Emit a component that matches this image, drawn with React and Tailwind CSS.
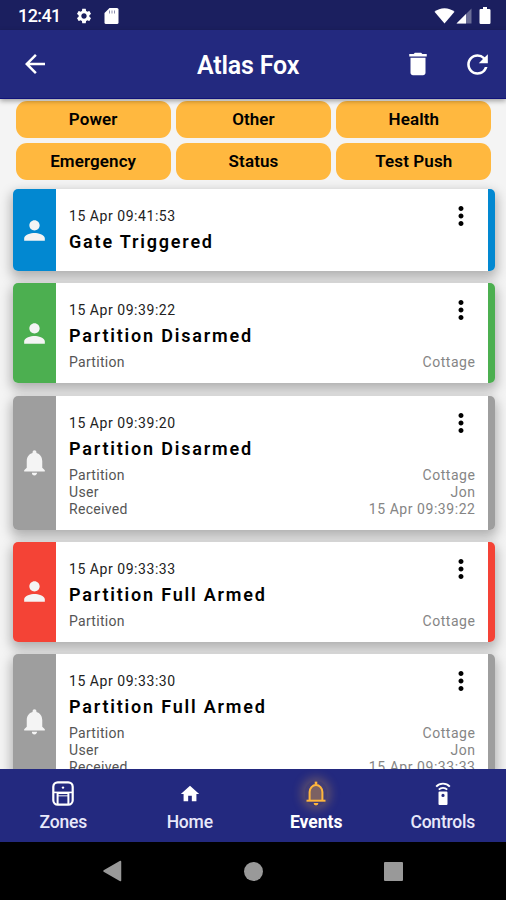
import React from "react"
import {
  MdArrowBack,
  MdDelete,
  MdRefresh,
  MdPerson,
  MdNotifications,
  MdMoreVert,
  MdHome,
  MdSettings,
} from "react-icons/md"

const filters = ["Power", "Other", "Health", "Emergency", "Status", "Test Push"]

const events = [
  {
    time: "15 Apr 09:41:53",
    title: "Gate Triggered",
    color: "bg-[#0288d1]",
    height: "h-[82px]",
    icon: MdPerson,
    details: [],
  },
  {
    time: "15 Apr 09:39:22",
    title: "Partition Disarmed",
    color: "bg-[#4caf50]",
    height: "h-[100px]",
    icon: MdPerson,
    details: [["Partition", "Cottage"]],
  },
  {
    time: "15 Apr 09:39:20",
    title: "Partition Disarmed",
    color: "bg-[#9e9e9e]",
    height: "h-[134px]",
    icon: MdNotifications,
    details: [
      ["Partition", "Cottage"],
      ["User", "Jon"],
      ["Received", "15 Apr 09:39:22"],
    ],
  },
  {
    time: "15 Apr 09:33:33",
    title: "Partition Full Armed",
    color: "bg-[#f44336]",
    height: "h-[100px]",
    icon: MdPerson,
    details: [["Partition", "Cottage"]],
  },
  {
    time: "15 Apr 09:33:30",
    title: "Partition Full Armed",
    color: "bg-[#9e9e9e]",
    height: "h-[134px]",
    icon: MdNotifications,
    details: [
      ["Partition", "Cottage"],
      ["User", "Jon"],
      ["Received", "15 Apr 09:33:33"],
    ],
  },
]

const ZonesIcon = () => (
  <svg width="22" height="25" viewBox="0 0 22 25" fill="none">
    <rect x="1.3" y="1.3" width="19.4" height="22.4" rx="4.5" stroke="white" strokeWidth="2.2" />
    <path d="M2 11.400h18" stroke="white" strokeWidth="1.6" />
    <circle cx="11" cy="6.6" r="1.2" fill="white" />
    <path d="M5.600 23.500V12h10.800v11.500" stroke="white" strokeWidth="2" />
    <path d="M6 14.800h10" stroke="white" strokeWidth="1.2" strokeOpacity="0.8" />
  </svg>
)

const BellIcon = () => (
  <svg width="22" height="25" viewBox="0 0 22 25" fill="none">
    <path
      d="M4.600 19.400V11a6.400 7 0 0 1 12.800 0v8.400"
      fill="#ffb63d"
      fillOpacity="0.3"
      stroke="#ffb63d"
      strokeWidth="2"
    />
    <path d="M1.500 19.700h19" stroke="#ffb63d" strokeWidth="2" />
    <path d="M11 .6v3" stroke="#ffb63d" strokeWidth="2.6" />
    <path d="M8.600 22h4.800a2.400 2.400 0 0 1-4.800 0z" fill="#ffb63d" />
  </svg>
)

const RemoteIcon = () => (
  <svg width="16" height="24" viewBox="0 0 16 24" fill="none">
    <path d="M1.200 4.600a9.200 9.200 0 0 1 13.600 0" stroke="white" strokeWidth="1.900" />
    <path d="M3.800 7.600a5.800 5.800 0 0 1 8.400 0" stroke="white" strokeWidth="1.800" />
    <path
      d="M4.500 9.600h7a1 1 0 0 1 1 1V22a1 1 0 0 1-1 1h-7a1 1 0 0 1-1-1V10.600a1 1 0 0 1 1-1zM8 11.800a1.600 1.600 0 1 0 0 3.200 1.600 1.600 0 0 0 0-3.200z"
      fill="white"
      fillRule="evenodd"
    />
  </svg>
)

const StatusBar = () => (
  <div className="h-[30px] shrink-0 bg-[#1b1f5f] flex items-center justify-between pl-[18px] pr-[15px] pt-[2px] text-white">
    <div className="flex items-center">
      <span className="w-[57px] text-[18px] font-medium leading-none tracking-[-0.6px]">12:41</span>
      <MdSettings className="text-[18px]" />
      <svg className="ml-[10.500px]" width="15" height="16" viewBox="0 0 15 16">
        <path
          d="M5.500 0H13a1.500 1.500 0 0 1 1.500 1.500v13A1.500 1.500 0 0 1 13 16H2a1.500 1.500 0 0 1-1.500-1.500V5z"
          fill="white"
        />
        <path d="M5.500 2.500v3M8 2.500v3M10.500 2.500v3" stroke="#1b1f5f" strokeWidth="1" strokeOpacity="0.5" />
      </svg>
    </div>
    <div className="flex items-center">
      <svg width="21" height="16" viewBox="0 0 21 16">
        <path d="M.5 3.800a15.500 15.500 0 0 1 20 0L10.500 15.500z" fill="white" />
      </svg>
      <svg className="ml-[1.500px]" width="16" height="16" viewBox="0 0 16 16">
        <path d="M15.500.500v15H.500z" fill="white" fillOpacity="0.35" />
        <path d="M10 6v9.500H.500z" fill="white" />
      </svg>
      <svg className="ml-[7px]" width="12" height="18" viewBox="0 0 12 18">
        <path
          d="M4 0h4v2h2.500A1.200 1.200 0 0 1 11.500 3.200v12.600a1.200 1.200 0 0 1-1.200 1.200H1.700a1.200 1.200 0 0 1-1.200-1.200V3.200A1.200 1.200 0 0 1 1.700 2H4z"
          fill="white"
        />
      </svg>
    </div>
  </div>
)

const EventCard = ({ event }) => {
  const Icon = event.icon
  return (
    <div
      className={`${event.height} shrink-0 flex rounded-[5px] overflow-hidden shadow-[0_5px_12px_2px_rgba(0,0,0,0.28)]`}
    >
      <div className={`${event.color} w-[43px] flex items-center justify-center text-[#f4f4f4]`}>
        <Icon className="text-[31px]" />
      </div>
      <div className="relative flex-1 bg-white pl-[13px] pr-[13px] pt-[18px]">
        <p className="text-[14px] leading-[18px] tracking-[0.55px] text-[#222]">{event.time}</p>
        <h3 className="mt-[7px] text-[18px] leading-[20px] font-semibold tracking-[1.8px] text-black">
          {event.title}
        </h3>
        <div className="mt-[8px]">
          {event.details.map(([label, value]) => (
            <div key={label} className="flex justify-between text-[14px] leading-[17px]">
              <span className="tracking-[0.3px] text-[#555]">{label}</span>
              <span className="mr-[-0.500px] tracking-[0.55px] text-[#858585]">{value}</span>
            </div>
          ))}
        </div>
        <MdMoreVert className="absolute right-[12px] top-[12px] text-[30px] text-black" />
      </div>
      <div className={`${event.color} w-[6.500px]`} />
    </div>
  )
}

const NavItem = ({ label, active, children }) => (
  <div className="flex-1 flex flex-col items-center">
    <div className="h-[27px] flex items-center justify-center">{children}</div>
    <span
      className={`mt-[4px] text-[17.500px] leading-[22px] ${active ? "font-bold text-white" : "font-medium tracking-[-0.2px] text-[#e8e8fa]"}`}
    >
      {label}
    </span>
  </div>
)

const App = () => {
  return (
    <div className="w-[506px] h-[900px] flex flex-col overflow-hidden bg-[#f4f4f4] font-['Roboto',sans-serif]">
      <StatusBar />

      {/* App bar */}
      <header className="z-10 h-[69px] shrink-0 bg-[#23297f] border-b border-[#10127a] shadow-[0_2px_5px_rgba(0,0,0,0.35)] flex items-center pl-[20px] pr-[13px] text-white">
        <MdArrowBack className="text-[30px]" />
        <h1 className="ml-[147px] mt-[2px] w-[206px] text-[25px] font-semibold tracking-[-0.2px] leading-none">
          Atlas Fox
        </h1>
        <MdDelete className="text-[30px]" />
        <MdRefresh className="ml-[29px] text-[31px]" />
      </header>

      {/* Event list */}
      <main className="flex-1 min-h-0 overflow-hidden">
        <div className="grid grid-cols-3 gap-[5px] pl-[15.500px] pr-[14.500px] pt-[2px]">
          {filters.map((name) => (
            <button
              key={name}
              className="h-[37px] pt-px rounded-[11px] bg-[#ffb83f] text-[17px] font-semibold tracking-[0.1px] text-black"
            >
              {name}
            </button>
          ))}
        </div>
        <div className="flex flex-col gap-[12.300px] pt-[9px] pl-[13px] pr-[11.500px]">
          {events.map((event) => (
            <EventCard key={event.time} event={event} />
          ))}
        </div>
      </main>

      {/* Bottom tabs */}
      <nav className="z-10 h-[73px] shrink-0 bg-[#23297f] flex pt-[11px]">
        <NavItem label="Zones">
          <ZonesIcon />
        </NavItem>
        <NavItem label="Home">
          <MdHome className="text-[22px] text-white" />
        </NavItem>
        <NavItem label="Events" active>
          <div className="rounded-full bg-[#ffb63d]/15 shadow-[0_0_10px_4px_rgba(255,182,61,0.25)]">
            <BellIcon />
          </div>
        </NavItem>
        <NavItem label="Controls">
          <RemoteIcon />
        </NavItem>
      </nav>

      {/* System navigation */}
      <div className="h-[58px] shrink-0 bg-black flex items-center justify-between pl-[103px] pr-[103px]">
        <svg width="19" height="22" viewBox="0 0 19 22">
          <path d="M17.500 1.500v19L1 11z" fill="#999" stroke="#999" strokeWidth="1.500" strokeLinejoin="round" />
        </svg>
        <div className="size-[19px] rounded-full bg-[#999]" />
        <div className="size-[19px] rounded-[1px] bg-[#999]" />
      </div>
    </div>
  )
}

export default App
